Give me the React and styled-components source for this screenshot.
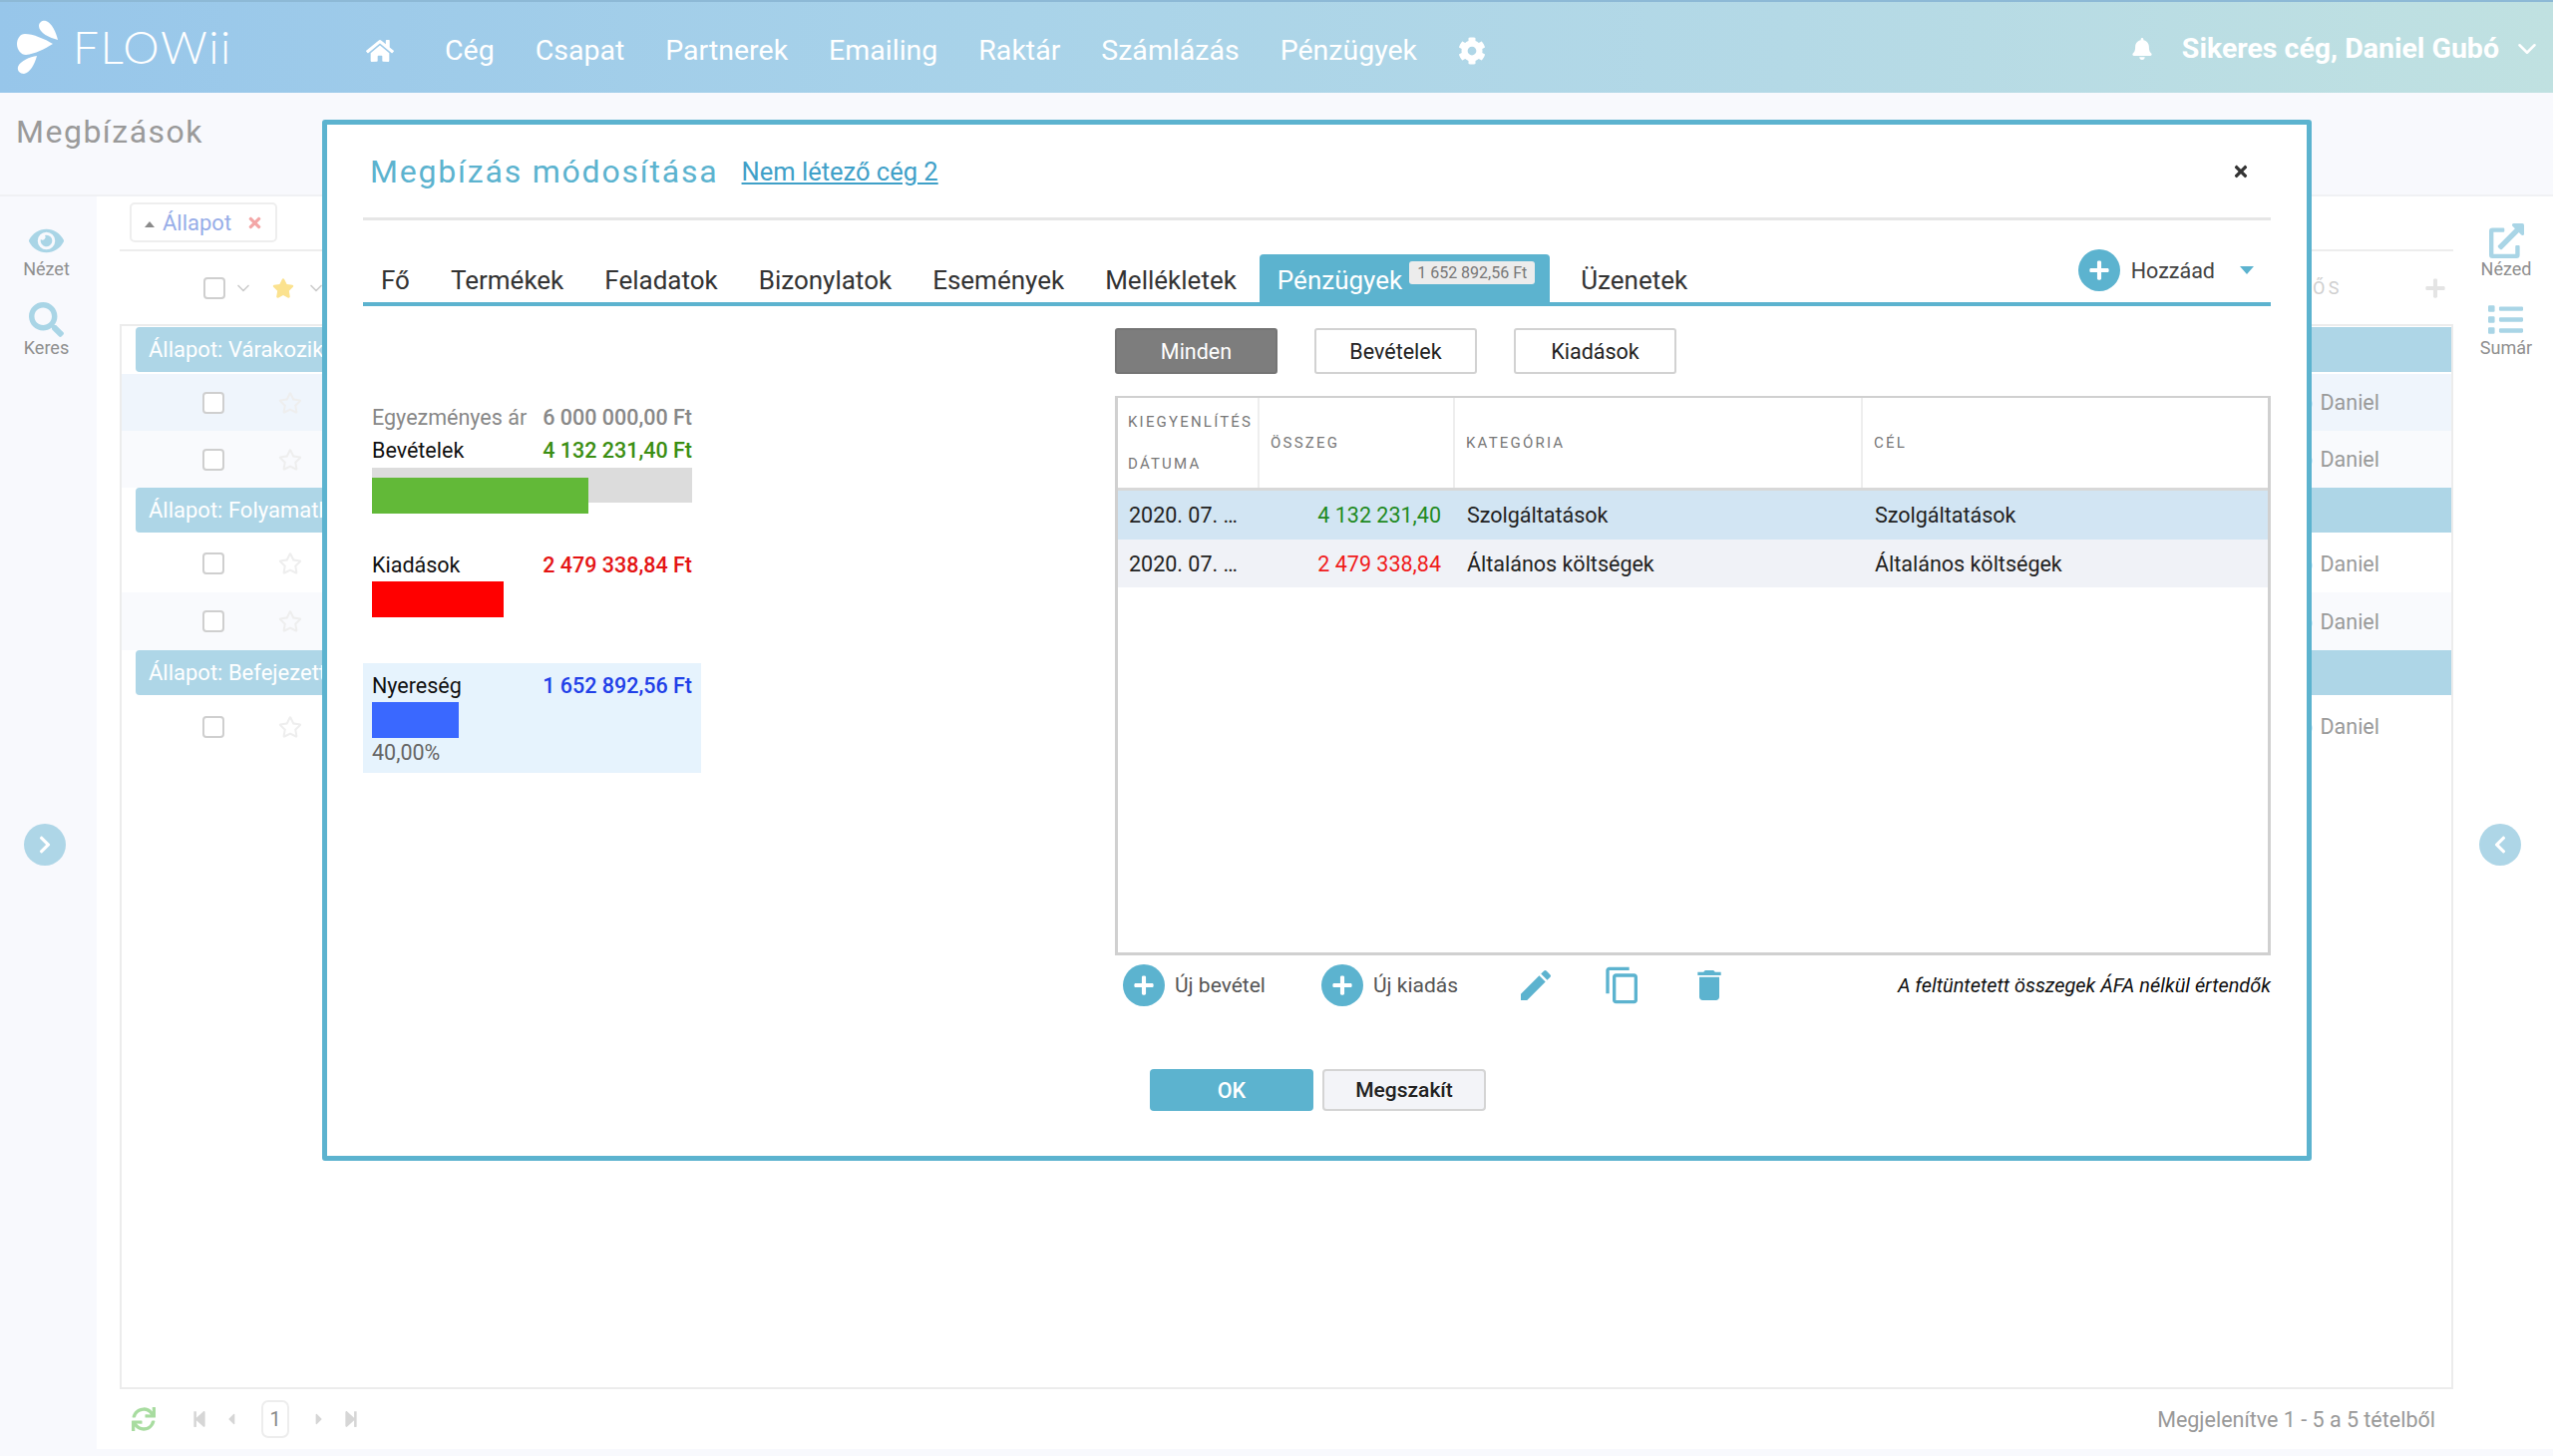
import React from 'react';
import styled, { createGlobalStyle } from 'styled-components';
import {
  FaHome, FaCog, FaBell, FaEye, FaSearch, FaExternalLinkAlt, FaList, FaSync, FaPlus, FaStar, FaRegStar,
  FaCaretLeft, FaCaretRight, FaStepBackward, FaStepForward, FaChevronLeft, FaChevronRight, FaTimes,
} from 'react-icons/fa';
import { MdCreate, MdContentCopy, MdDelete } from 'react-icons/md';
import { FiChevronDown } from 'react-icons/fi';

const Global = createGlobalStyle`
  html, body { margin: 0; padding: 0; }
  body { font-family: Roboto, "Liberation Sans", sans-serif; background: #f8f9fd; }
  * { box-sizing: border-box; }
`;

const Page = styled.div`
  position: relative;
  width: 2560px;
  height: 1460px;
  overflow: hidden;
  display: flex;
  flex-direction: column;
  background: #f8f9fd;
`;

const TopBar = styled.header`
  height: 93px;
  flex: none;
  display: flex;
  align-items: center;
  padding: 6px 11px 0 17px;
  color: #fff;
  background: linear-gradient(90deg, #97c6ea 0%, #a9d3e9 40%, #b4d9e6 70%, #c0e1e1 100%);
  border-top: 2px solid #8db9d6;
`;

const Logo = styled.div`
  display: flex;
  align-items: center;
  gap: 15px;
  width: 350px;
  font-family: Lato, Roboto, sans-serif;
  font-size: 46px;
  font-weight: 300;
  letter-spacing: 1.5px;
  margin-top: -8px;
`;

const NavList = styled.nav`
  display: flex;
  align-items: center;
  gap: 41px;
  font-size: 28.5px;
  flex: 1;
`;

const NavIcon = styled.span`
  display: flex;
  font-size: 28px;
  margin-right: ${p => p.$gap || 0}px;
`;

const UserBox = styled.div`
  display: flex;
  align-items: center;
  font-size: 28.5px;
  font-weight: 700;
  gap: 29px;
  margin-top: -4px;
`;

const UserChevron = styled(FiChevronDown)`
  font-size: 30px;
  margin-left: -16px;
`;

const SubHeader = styled.div`
  height: 104px;
  flex: none;
  padding: 20px 16px 0;
  font-size: 32px;
  letter-spacing: 1.5px;
  color: #9a9a9a;
  border-bottom: 2px solid #f0f1f4;
`;

const Content = styled.div`
  flex: none;
  height: 1256px;
  display: flex;
`;

const Rail = styled.aside`
  flex: none;
  width: ${p => p.$width}px;
  background: ${p => p.$bg};
  display: flex;
  flex-direction: column;
  align-items: center;
  padding: 27px ${p => p.$right || 0}px 0 ${p => p.$left || 0}px;
`;

const RailItem = styled.div`
  display: flex;
  flex-direction: column;
  align-items: center;
  height: 79px;
  font-size: 18px;
  color: #8f8f8f;
  svg { color: #a9d5e6; font-size: 35px; }
`;

const RoundArrow = styled.div`
  width: 42px;
  height: 42px;
  border-radius: 50%;
  background: #aed6e7;
  color: #fff;
  display: flex;
  align-items: center;
  justify-content: center;
  font-size: 20px;
  margin-top: 444px;
  margin-right: ${p => p.$shift || 0}px;
`;

const Main = styled.main`
  flex: 1;
  background: #fff;
  padding-left: 23px;
  display: flex;
  flex-direction: column;
`;

const FilterBar = styled.div`
  height: 55px;
  flex: none;
  padding: 6px 0 0 10px;
  border-bottom: 2px solid #ededed;
`;

const FilterChip = styled.div`
  width: 148px;
  height: 40px;
  display: flex;
  align-items: center;
  padding: 0 12px 0 13px;
  border: 2px solid #eeeeee;
  border-radius: 5px;
  font-size: 22px;
  color: #97ade8;
  i { width: 0; height: 0; border: 5px solid transparent; border-bottom: 6px solid #8a8a8a; border-top: 0; margin-right: 8px; margin-top: 4px; }
  svg { color: #f3a6a6; margin-left: auto; font-size: 17px; }
`;

const Toolbar = styled.div`
  height: 73px;
  flex: none;
  display: flex;
  align-items: center;
  padding-left: 84px;
  color: #ccc;
  font-size: 20px;
`;

const SmallBox = styled.span`
  display: block;
  width: 22px;
  height: 22px;
  background: #fff;
  border: 2px solid #cfcfcf;
  border-radius: 4px;
`;

const HeadChevron = styled(FiChevronDown)`
  margin-left: ${p => p.$left || 0}px;
`;

const HeadStar = styled(FaStar)`
  color: #fbe28f;
  font-size: 22px;
  margin-left: 19px;
  margin-right: 12px;
`;

const HeadCell = styled.div`
  margin-left: auto;
  display: flex;
  align-items: center;
  gap: 82px;
  padding-right: 7px;
  font-size: 18px;
  letter-spacing: 3.5px;
  color: #cfcfcf;
  svg { font-size: 22px; color: #e4e4e4; }
`;

const ListBox = styled.div`
  flex: none;
  height: 1068px;
  border: 2px solid #ececec;
  padding-top: 1px;
`;

const Group = styled.div`
  height: 45px;
  margin: 0 0 2px 14px;
  padding-left: 13px;
  display: flex;
  align-items: center;
  background: #aed6e7;
  border-radius: 4px 0 0 4px;
  color: #fff;
  font-size: 22px;
`;

const Row = styled.div`
  height: ${p => p.$h}px;
  display: flex;
  align-items: center;
  padding-left: 81px;
  background: ${p => p.$bg || '#fff'};
`;

const RowStar = styled(FaRegStar)`
  color: #eeeeee;
  font-size: 24px;
  margin-left: 54px;
`;

const Owner = styled.span`
  margin-left: auto;
  padding-right: 72px;
  font-size: 21.5px;
  word-spacing: 2px;
  color: #9a9a9a;
`;

const Footer = styled.div`
  flex: 1;
  display: flex;
  align-items: center;
  padding: 0 18px 0 12px;
  color: #d6d6d6;
`;

const Refresh = styled(FaSync)`
  color: #a8dca0;
  font-size: 24px;
  margin-right: 35px;
`;

const Pager = styled.div`
  display: flex;
  align-items: center;
  gap: 14px;
  font-size: 18px;
`;

const PageBox = styled.span`
  width: 28px;
  height: 38px;
  margin: 0 7px;
  border: 2px solid #ededed;
  border-radius: 7px;
  display: flex;
  align-items: center;
  justify-content: center;
  color: #888;
  font-size: 20px;
`;

const Summary = styled.span`
  margin-left: auto;
  color: #999;
  font-size: 21.5px;
`;

/* modal lies over the list */
const Modal = styled.section`
  position: absolute;
  left: 323px;
  top: 120px;
  width: 1995px;
  height: 1044px;
  background: #fff;
  border: 5px solid #5cb3cf;
  border-radius: 3px;
  padding: 0 36px;
  display: flex;
  flex-direction: column;
`;

const ModalHead = styled.div`
  height: 96px;
  flex: none;
  display: flex;
  align-items: center;
  padding: 0 7px;
  border-bottom: 3px solid #e6e6e6;
`;

const ModalTitle = styled.h2`
  margin: 0;
  font-size: 32px;
  font-weight: 400;
  letter-spacing: 1.8px;
  color: #5cb3cf;
`;

const CompanyLink = styled.a`
  margin-left: 23px;
  font-size: 25.5px;
  color: #3fa0c8;
  text-decoration: underline;
`;

const CloseBtn = styled(FaTimes)`
  margin-left: auto;
  margin-right: 14px;
  color: #333;
  font-size: 18px;
`;

const TabBar = styled.div`
  height: 86px;
  flex: none;
  display: flex;
  align-items: flex-end;
  border-bottom: 4px solid #5cb3cf;
`;

const Tab = styled.div`
  height: 48px;
  padding: 3px 19px 0 18px;
  margin-right: 4px;
  display: flex;
  align-items: center;
  font-size: 26px;
  color: #333;
`;

const ActiveTab = styled.div`
  height: 48px;
  padding: 0 15px 0 18px;
  margin: 0 13px 0 0;
  display: flex;
  align-items: center;
  gap: 7px;
  font-size: 26px;
  color: #fff;
  background: #5cb3cf;
  border-radius: 4px 4px 0 0;
  & > span:first-child { padding-top: 3px; }
`;

const TabBadge = styled.span`
  align-self: flex-start;
  margin-top: 7px;
  height: 23px;
  padding: 0 8px;
  display: flex;
  align-items: center;
  font-size: 16px;
  color: #777;
  background: #ececec;
  border-radius: 3px;
`;

const AddButton = styled.div`
  margin-left: auto;
  margin-bottom: 11px;
  display: flex;
  align-items: center;
  gap: 11px;
  padding-right: 17px;
  font-size: 21.5px;
  color: #444;
  i { width: 0; height: 0; margin-left: 14px; border: 7px solid transparent; border-top: 8px solid #5cb3cf; border-bottom: 0; }
`;

const PlusDot = styled.span`
  width: 42px;
  height: 42px;
  border-radius: 50%;
  background: #5cb3cf;
  color: #fff;
  display: flex;
  align-items: center;
  justify-content: center;
  font-size: 22px;
`;

const Columns = styled.div`
  flex: none;
  display: flex;
`;

const SidePanel = styled.div`
  width: 339px;
  flex: none;
  margin-right: 415px;
  padding-top: 95px;
  font-size: 21.5px;
`;

const StatRow = styled.div`
  display: flex;
  justify-content: space-between;
  align-items: center;
  height: 33px;
  padding: 0 9px;
  margin-top: ${p => p.$top || 0}px;
  color: ${p => p.$label || '#111'};
  b { font-weight: 500; color: ${p => p.$value || '#111'}; }
`;

const Track = styled.div`
  position: relative;
  height: 35px;
  margin: 1px 9px 0;
  background: #dcdcdc;
`;

const OverBar = styled.div`
  position: absolute;
  left: 0;
  top: 10px;
  height: 36px;
  background: #62b938;
`;

const Bar = styled.div`
  height: 36px;
  margin: 0 9px;
  background: ${p => p.$color};
`;

const ProfitBox = styled.div`
  margin-top: 46px;
  height: 110px;
  padding-top: 6px;
  background: #e6f3fd;
  small { display: block; padding: 2px 9px; font-size: 21.5px; color: #666; }
`;

const TablePanel = styled.div`
  flex: none;
  width: 1159px;
  padding-top: 22px;
`;

const FilterBtns = styled.div`
  display: flex;
  gap: 37px;
  margin-bottom: 22px;
`;

const FilterBtn = styled.button`
  width: 163px;
  height: 46px;
  padding: 0;
  font: 400 21.5px Roboto, sans-serif;
  border-radius: 3px;
  color: ${p => (p.$active ? '#fff' : '#222')};
  background: ${p => (p.$active ? '#7d7d7d' : '#fff')};
  border: 2px solid ${p => (p.$active ? '#757575' : '#d2d2d2')};
`;

const Grid = styled.div`
  height: 561px;
  border: 3px solid #d0d0d0;
  border-top-width: 2px;
`;

const GridRow = styled.div`
  display: grid;
  grid-template-columns: 142px 196px 409px 1fr;
  height: ${p => p.$h}px;
  align-items: center;
  background: ${p => p.$bg || '#fff'};
  font-size: 21.5px;
  color: #222;
`;

const GridHead = styled(GridRow)`
  align-items: stretch;
  border-bottom: 3px solid #d8d8d8;
  font-size: 15px;
  letter-spacing: 2.2px;
  color: #777;
`;

const HeadTitle = styled.div`
  display: flex;
  flex-direction: column;
  justify-content: center;
  gap: 24px;
  padding-left: ${p => p.$left || 11}px;
  border-right: 2px solid #eeeeee;
  &:last-child { border-right: 0; }
`;

const Cell = styled.div`
  padding-left: ${p => p.$left ?? 12}px;
  padding-right: ${p => p.$right ?? 0}px;
  text-align: ${p => p.$align || 'left'};
  color: ${p => p.$color || 'inherit'};
`;

const ActionBar = styled.div`
  height: 60px;
  display: flex;
  align-items: center;
  padding-left: 8px;
  font-size: 21px;
  color: #555;
`;

const ActionItem = styled.div`
  display: flex;
  align-items: center;
  gap: 10px;
  margin-right: ${p => p.$gap}px;
`;

const ToolIcon = styled.span`
  display: flex;
  color: #5cb3cf;
  font-size: 40px;
  margin-right: ${p => p.$gap}px;
`;

const Note = styled.em`
  margin-left: auto;
  font-size: 19.9px;
  color: #111;
`;

const FormFooter = styled.div`
  flex: none;
  margin-top: 54px;
  margin-left: 789px;
  display: flex;
  gap: 9px;
`;

const OkBtn = styled.button`
  width: 164px;
  height: 42px;
  padding: 0;
  background: #5cb3cf;
  color: #fff;
  border: 0;
  border-radius: 4px;
  font: 500 21.5px Roboto, sans-serif;
`;

const CancelBtn = styled.button`
  width: 164px;
  height: 42px;
  padding: 0;
  background: #f3f4f8;
  color: #222;
  border: 2px solid #d4d4d4;
  border-radius: 4px;
  font: 500 21px Roboto, sans-serif;
`;

const navItems = ['Cég', 'Csapat', 'Partnerek', 'Emailing', 'Raktár', 'Számlázás', 'Pénzügyek'];
const tabs = ['Fő', 'Termékek', 'Feladatok', 'Bizonylatok', 'Események', 'Mellékletek'];

const rows = [
  { type: 'group', label: 'Állapot: Várakozik' },
  { bg: '#eff5fc', h: 57 },
  { bg: '#f9fafd', h: 57 },
  { type: 'group', label: 'Állapot: Folyamatban' },
  { h: 58 },
  { bg: '#f9fafd', h: 58 },
  { type: 'group', label: 'Állapot: Befejezett' },
  { h: 59 },
];

const LogoMark = () => (
  <svg width="41" height="54" viewBox="0 0 41 54" fill="#fff">
    <path d="M41 20C33 18 22 13 22 6 22 2 26 0 29 1 35 3 39 12 41 20Z" />
    <path d="M36 24C28 19 16 14 8 14 3 14 0 19 0 24 0 30 4 35 9 35 18 34 28 29 36 24Z" />
    <path d="M20 36C13 37 3 41 1 47 0 51 3 54 7 54 13 53 18 44 20 36Z" />
  </svg>
);

function App() {
  return (
    <Page>
      <Global />
      <TopBar>
        <Logo><LogoMark />FLOWii</Logo>
        <NavList>
          <NavIcon $gap={10}><FaHome /></NavIcon>
          {navItems.map(item => <span key={item}>{item}</span>)}
          <NavIcon><FaCog /></NavIcon>
        </NavList>
        <UserBox>
          <FaBell size={22} />
          <span>Sikeres cég, Daniel Gubó</span>
          <UserChevron />
        </UserBox>
      </TopBar>
      <SubHeader>Megbízások</SubHeader>
      <Content>
        <Rail $width={97} $bg="#f8f9fd" $right={4}>
          <RailItem><FaEye />Nézet</RailItem>
          <RailItem><FaSearch />Keres</RailItem>
          <RoundArrow $shift={3}><FaChevronRight /></RoundArrow>
        </Rail>
        <Main>
          <FilterBar>
            <FilterChip><i />Állapot<FaTimes /></FilterChip>
          </FilterBar>
          <Toolbar>
            <SmallBox />
            <HeadChevron $left={8} />
            <HeadStar />
            <HeadChevron />
            <HeadCell>FELELŐS<FaPlus /></HeadCell>
          </Toolbar>
          <ListBox>
            {rows.map((row, i) => (row.type === 'group'
              ? <Group key={i}>{row.label}</Group>
              : (
                <Row key={i} $bg={row.bg} $h={row.h}>
                  <SmallBox />
                  <RowStar />
                  <Owner>Gubó Daniel</Owner>
                </Row>
              )))}
          </ListBox>
          <Footer>
            <Refresh />
            <Pager>
              <FaStepBackward />
              <FaCaretLeft />
              <PageBox>1</PageBox>
              <FaCaretRight />
              <FaStepForward />
            </Pager>
            <Summary>Megjelenítve 1 - 5 a 5 tételből</Summary>
          </Footer>
        </Main>
        <Rail $width={100} $bg="#fff" $left={6}>
          <RailItem><FaExternalLinkAlt />Nézed</RailItem>
          <RailItem><FaList />Sumár</RailItem>
          <RoundArrow $shift={12}><FaChevronLeft /></RoundArrow>
        </Rail>
      </Content>

      <Modal>
        <ModalHead>
          <ModalTitle>Megbízás módosítása</ModalTitle>
          <CompanyLink>Nem létező cég 2</CompanyLink>
          <CloseBtn />
        </ModalHead>
        <TabBar>
          {tabs.map(t => <Tab key={t}>{t}</Tab>)}
          <ActiveTab><span>Pénzügyek</span><TabBadge>1 652 892,56 Ft</TabBadge></ActiveTab>
          <Tab>Üzenetek</Tab>
          <AddButton><PlusDot><FaPlus /></PlusDot>Hozzáad<i /></AddButton>
        </TabBar>
        <Columns>
          <SidePanel>
            <StatRow $label="#888" $value="#888"><span>Egyezményes ár</span><b>6 000 000,00 Ft</b></StatRow>
            <StatRow $value="#3b8e12"><span>Bevételek</span><b>4 132 231,40 Ft</b></StatRow>
            <Track><OverBar style={{ width: `${(4132231.4 / 6000000) * 100 * 0.98}%` }} /></Track>
            <StatRow $value="#e41414" $top={46}><span>Kiadások</span><b>2 479 338,84 Ft</b></StatRow>
            <Bar $color="#ff0000" style={{ width: 132 }} />
            <ProfitBox>
              <StatRow $value="#2140e8"><span>Nyereség</span><b>1 652 892,56 Ft</b></StatRow>
              <Bar $color="#3a68ff" style={{ width: 87 }} />
              <small>40,00%</small>
            </ProfitBox>
          </SidePanel>
          <TablePanel>
            <FilterBtns>
              <FilterBtn $active>Minden</FilterBtn>
              <FilterBtn>Bevételek</FilterBtn>
              <FilterBtn>Kiadások</FilterBtn>
            </FilterBtns>
            <Grid>
              <GridHead $h={93}>
                <HeadTitle $left={10}><span>KIEGYENLÍTÉS</span><span>DÁTUMA</span></HeadTitle>
                <HeadTitle>ÖSSZEG</HeadTitle>
                <HeadTitle>KATEGÓRIA</HeadTitle>
                <HeadTitle>CÉL</HeadTitle>
              </GridHead>
              <GridRow $h={49} $bg="#d2e5f3">
                <Cell $left={11}>2020. 07. …</Cell>
                <Cell $align="right" $right={14} $color="#1f8a1f">4 132 231,40</Cell>
                <Cell>Szolgáltatások</Cell>
                <Cell>Szolgáltatások</Cell>
              </GridRow>
              <GridRow $h={48} $bg="#f0f2f7">
                <Cell $left={11}>2020. 07. …</Cell>
                <Cell $align="right" $right={14} $color="#f01c1c">2 479 338,84</Cell>
                <Cell>Általános költségek</Cell>
                <Cell>Általános költségek</Cell>
              </GridRow>
            </Grid>
            <ActionBar>
              <ActionItem $gap={56}><PlusDot><FaPlus /></PlusDot>Új bevétel</ActionItem>
              <ActionItem $gap={58}><PlusDot><FaPlus /></PlusDot>Új kiadás</ActionItem>
              <ToolIcon $gap={47}><MdCreate /></ToolIcon>
              <ToolIcon $gap={47}><MdContentCopy /></ToolIcon>
              <ToolIcon $gap={0}><MdDelete /></ToolIcon>
              <Note>A feltüntetett összegek ÁFA nélkül értendők</Note>
            </ActionBar>
          </TablePanel>
        </Columns>
        <FormFooter>
          <OkBtn>OK</OkBtn>
          <CancelBtn>Megszakít</CancelBtn>
        </FormFooter>
      </Modal>
    </Page>
  );
}

export default App;
